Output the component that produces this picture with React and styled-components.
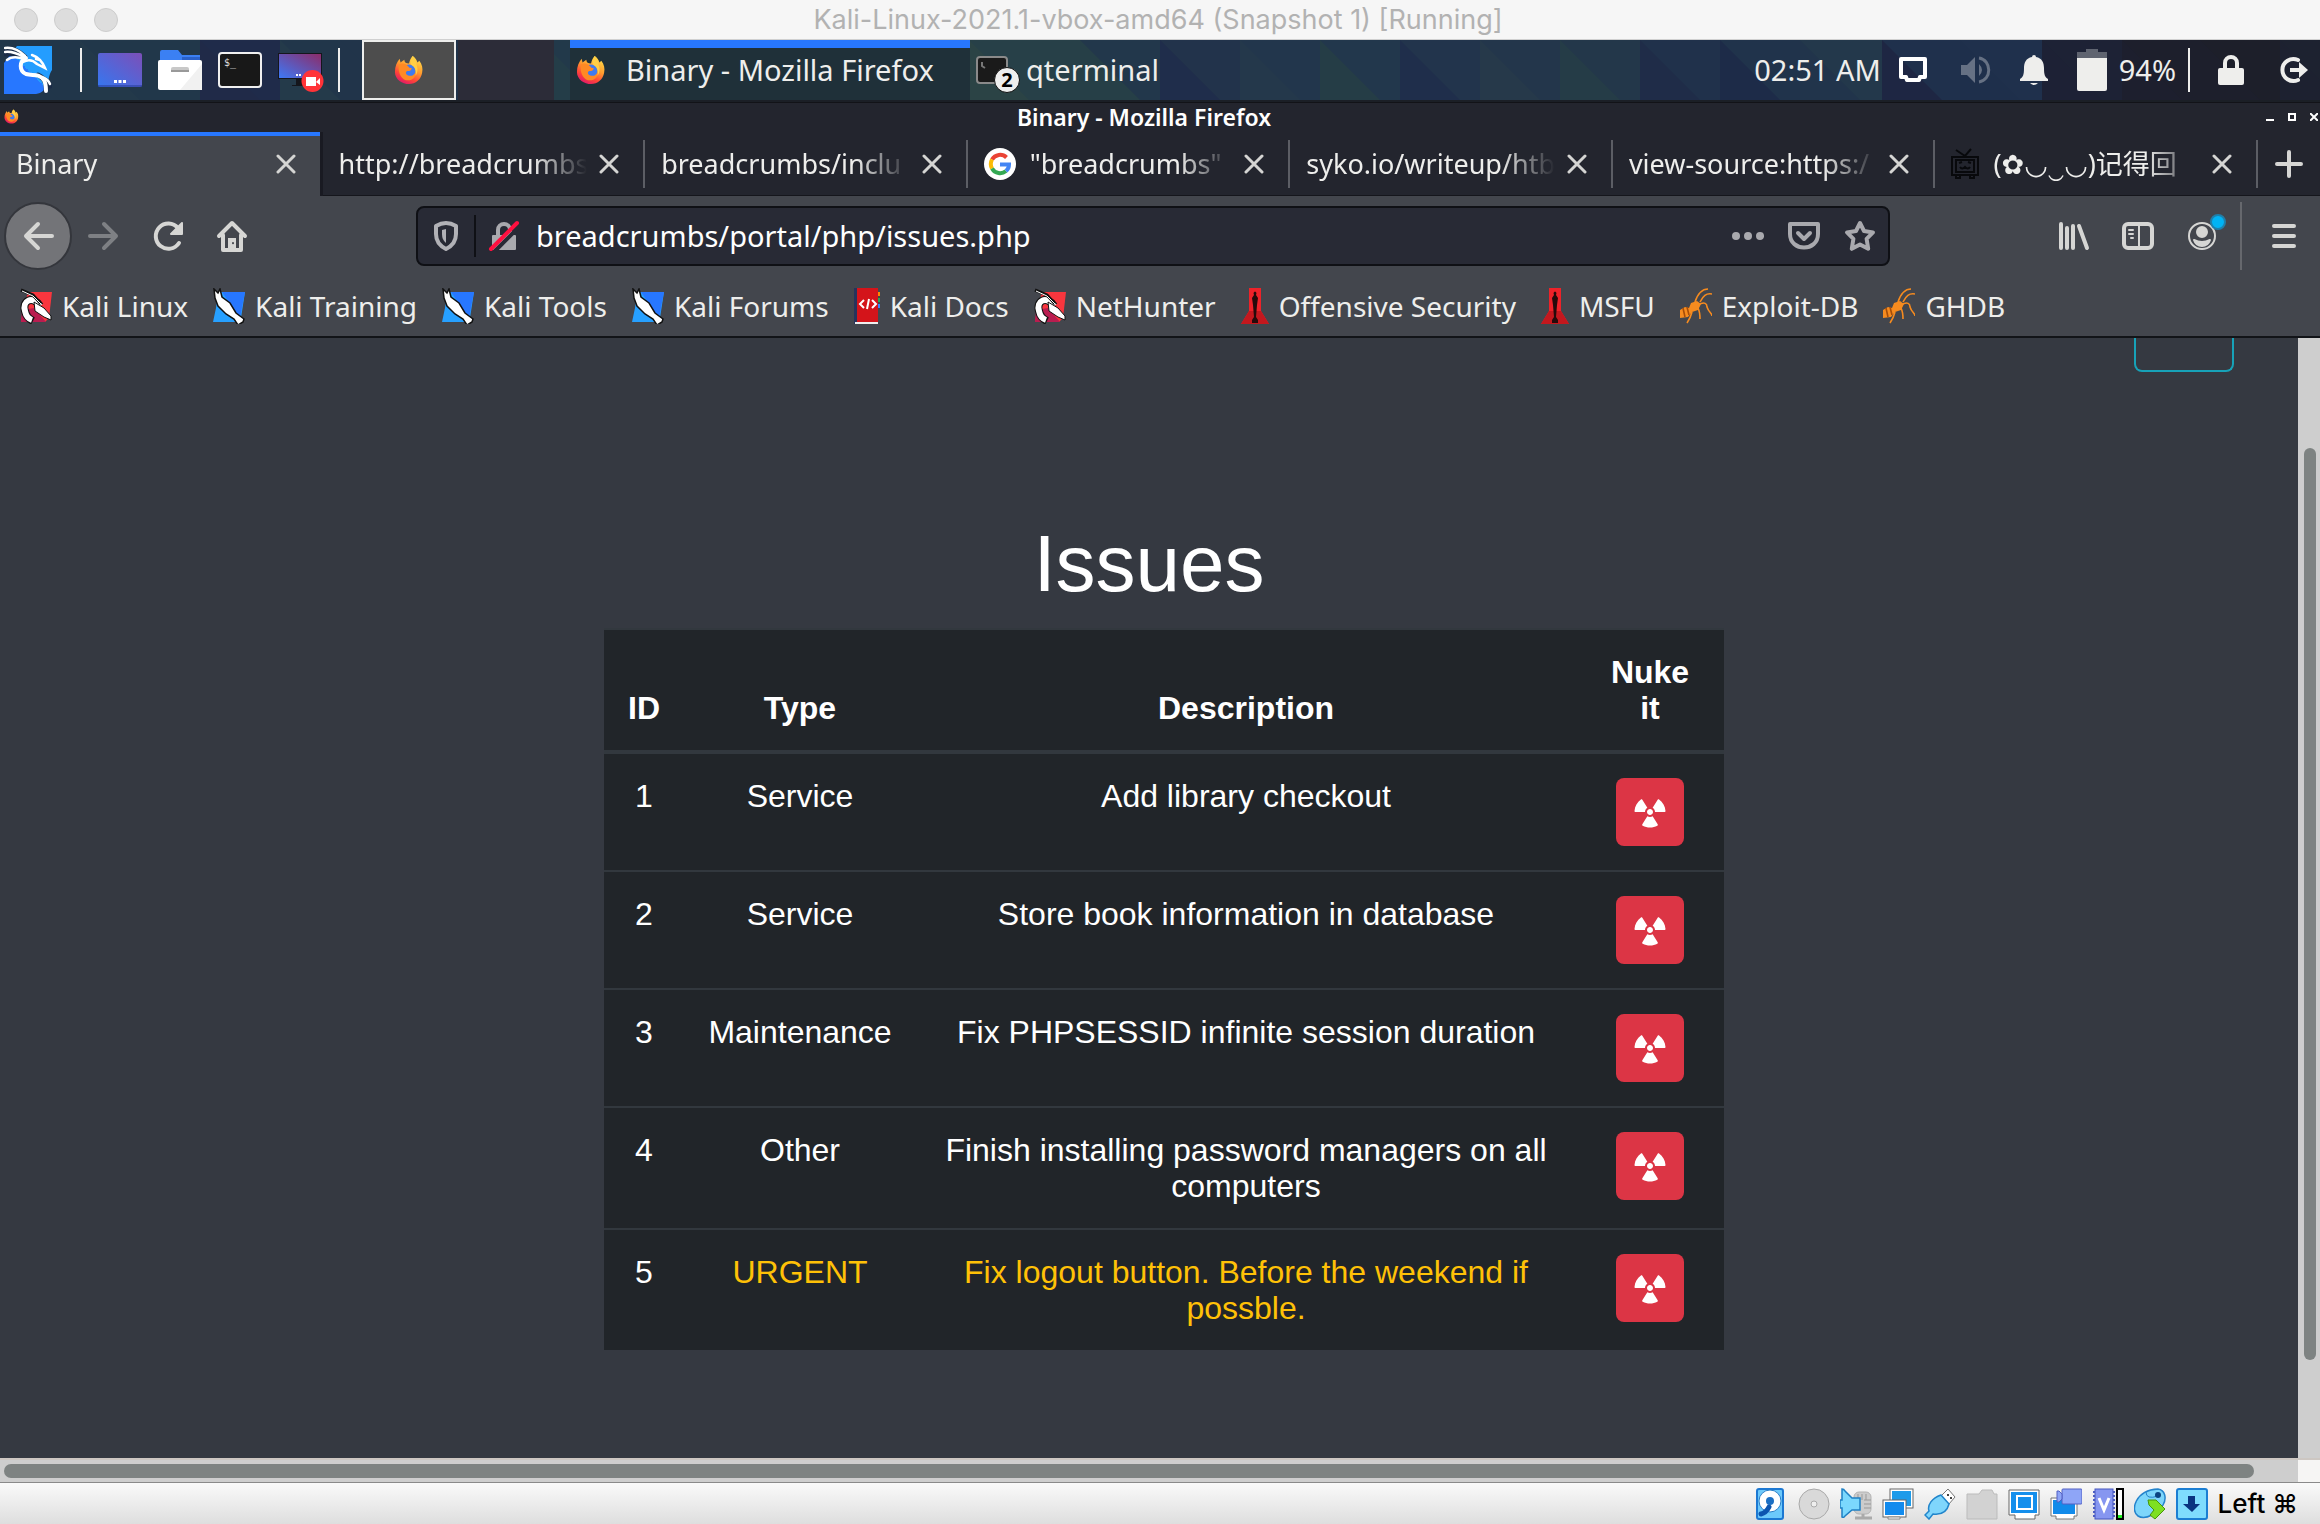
import React from "react";
import styled, { createGlobalStyle, css } from "styled-components";
import { FaRadiation } from "react-icons/fa";

const UI = `"Noto Sans", "DejaVu Sans", "Noto Sans CJK SC", sans-serif`;
const MAC = `Inter, "Liberation Sans", sans-serif`;
const WEB = `"Liberation Sans", Arial, sans-serif`;

const Global = createGlobalStyle`
  *, *::before, *::after { box-sizing: border-box; }
  body { margin: 0; background: #353941; overflow: hidden; }
  button, input { font: inherit; color: inherit; }
  svg { display: block; flex: none; }
`;

const Screen = styled.div`
  min-height: 100vh;
  display: flex;
  flex-direction: column;
  font-family: ${UI};
  font-size: 28px;
  line-height: 36px;
  color: #eeeeec;
`;

/* ---------- host window ---------- */
const HostBar = styled.header`
  display: grid;
  grid-template-columns: 1fr auto 1fr;
  align-items: center;
  height: 40px;
  padding: 0 18px 0 14px;
  background: #f6f6f6;
  border-bottom: 1px solid #d0d0d0;
  font-family: ${MAC};
  color: #b2b2b2;
`;
const HostTitle = styled.div`
  font-size: 27px;
  line-height: 36px;
  white-space: nowrap;
`;
const Lights = styled.div`
  display: flex;
  gap: 16px;
`;
const Light = styled.button`
  width: 24px;
  height: 24px;
  padding: 0;
  border: 1px solid #cdcdcd;
  border-radius: 50%;
  background: #dddddd;
`;

/* ---------- desktop panel ---------- */
const Panel = styled.div`
  position: relative;
  display: flex;
  align-items: center;
  height: 62px;
  border-bottom: 2px solid #1b1f26;
  background: #21354a;
  font-size: 29px;
  overflow: hidden;
`;
const Wallpaper = styled.svg`
  position: absolute;
  left: 0;
  top: 0;
`;
const PanelGroup = styled.div`
  position: relative;
  display: flex;
  align-items: center;
  height: 100%;
  gap: ${(p) => p.$gap || 0}px;
  padding: ${(p) => p.$pad || "0"};
  margin-left: ${(p) => (p.$end ? "auto" : "0")};
`;
const Divider = styled.span`
  flex: none;
  width: 2px;
  height: ${(p) => p.$h}px;
  background: ${(p) => p.$c || "#eeeeec"};
`;
const PlainButton = styled.button`
  display: flex;
  align-items: center;
  justify-content: center;
  flex: none;
  padding: 0;
  border: 0;
  background: none;
`;
const PinnedTask = styled(PlainButton)`
  width: 94px;
  height: 60px;
  border: 2px solid #eeeeec;
  background: #4d4d4d;
`;
const EmptyTask = styled.span`
  width: 96px;
  height: 60px;
  margin-left: 2px;
  background: #2c2c38;
`;
const Task = styled(PlainButton)`
  justify-content: flex-start;
  gap: ${(p) => (p.$active ? 20 : 8)}px;
  width: ${(p) => (p.$active ? 400 : 200)}px;
  height: 60px;
  padding: 0 6px;
  white-space: nowrap;
  ${(p) =>
    p.$active &&
    css`
      background: #1f3039;
      box-shadow: inset 0 8px #2777ff;
    `}
`;
const TaskIcon = styled.span`
  position: relative;
  display: flex;
`;
const Count = styled.span`
  position: absolute;
  left: 18px;
  top: 12px;
  width: 26px;
  height: 26px;
  border: 1px solid #111;
  border-radius: 50%;
  background: #eee;
  color: #000;
  font-size: 20px;
  line-height: 24px;
  font-weight: 700;
  text-align: center;
`;

/* ---------- browser chrome ---------- */
const TitleRow = styled.div`
  display: grid;
  grid-template-columns: 1fr auto 1fr;
  align-items: center;
  height: 30px;
  padding: 0 2px 2px 4px;
  background: #23252e;
  border-top: 1px solid #121318;
`;
const WindowTitle = styled.div`
  margin-right: 34px;
  font-size: 23px;
  line-height: 26px;
  font-weight: 600;
  color: #fff;
`;
const WindowButtons = styled.div`
  display: flex;
  justify-content: flex-end;
  gap: 14px;
`;
const TabStrip = styled.div`
  display: flex;
  height: 64px;
  background: #23252e;
  border-bottom: 1px solid #15161c;
  font-size: 27px;
`;
const Tab = styled.div`
  flex: 1 1 100px;
  min-width: 0;
  display: flex;
  align-items: center;
  gap: 6px;
  padding: 0 ${(p) => (p.$active ? 24 : 26)}px 0 16px;
  ${(p) =>
    p.$active
      ? css`
          height: 64px;
          background: #43464d;
          border-right: 3px solid #191a22;
          box-shadow: inset 0 4px #2777ff;
        `
      : css`
          background: linear-gradient(#5c5e65, #5c5e65) right center / 2px 48px no-repeat;
        `}
`;
const TabLabel = styled.button`
  flex: 1;
  min-width: 0;
  display: flex;
  align-items: center;
  gap: 14px;
  padding: 0;
  border: 0;
  background: none;
  text-align: left;
  white-space: nowrap;
  mask-image: linear-gradient(to left, transparent 6px, #000 60px);
`;
const NewTab = styled(PlainButton)`
  width: 62px;
`;
const NavBar = styled.div`
  display: flex;
  align-items: center;
  justify-content: space-between;
  height: 80px;
  padding: 0 20px 0 4px;
  background: #43464d;
`;
const NavGroup = styled.div`
  display: flex;
  align-items: center;
  gap: ${(p) => p.$gap}px;
`;
const BackButton = styled(PlainButton)`
  width: 68px;
  height: 68px;
  border: 2px solid #34363c;
  border-radius: 50%;
  background: #737478;
`;
const UrlBox = styled.div`
  flex: 1;
  display: flex;
  align-items: center;
  gap: 12px;
  height: 60px;
  margin: 0 168px;
  padding: 0 12px;
  border: 2px solid #0f1015;
  border-radius: 8px;
  background: #282a35;
  color: #fff;
`;
const UrlInput = styled.input`
  flex: 1;
  min-width: 0;
  padding: 0;
  margin-left: 4px;
  border: 0;
  outline: 0;
  background: none;
  font-size: 29px;
`;
const Account = styled(PlainButton)`
  position: relative;
`;
const Dot = styled.span`
  position: absolute;
  right: -8px;
  top: -6px;
  width: 16px;
  height: 16px;
  border: 2px solid #1f7fa9;
  border-radius: 50%;
  background: #00b3f4;
`;
const Bookmarks = styled.nav`
  display: flex;
  align-items: center;
  gap: 25px;
  height: 62px;
  padding: 0 20px;
  background: #43464d;
  border-bottom: 2px solid #121418;
`;
const Bookmark = styled.a`
  display: flex;
  align-items: center;
  gap: 10px;
  color: inherit;
  text-decoration: none;
  white-space: nowrap;
`;

/* ---------- web page ---------- */
const Viewport = styled.div`
  flex: 1;
  display: flex;
`;
const Page = styled.main`
  flex: 1;
  display: flex;
  flex-direction: column;
  background: #353941;
  font-family: ${WEB};
  color: #fff;
`;
const HomeButton = styled.button`
  align-self: flex-end;
  width: 100px;
  height: 34px;
  margin-right: 64px;
  border: 2px solid #17a2b8;
  border-top: 0;
  border-radius: 0 0 8px 8px;
  background: none;
`;
const Heading = styled.h1`
  margin: 144px 0 16px;
  font-size: 80px;
  line-height: 96px;
  font-weight: 400;
  text-align: center;
`;
const TableWrap = styled.div`
  display: flex;
  justify-content: center;
  padding-left: 30px;
`;
const Table = styled.table`
  width: 1120px;
  max-width: 100%;
  table-layout: fixed;
  border-collapse: separate;
  border-spacing: 0;
  background: #212529;
  font-size: 32px;
  line-height: 36px;
  text-align: center;
`;
const Col = styled.col`
  width: ${(p) => p.$w};
`;
const Th = styled.th`
  padding: 24px;
  border-top: 2px solid #32383e;
  border-bottom: 4px solid #32383e;
  vertical-align: bottom;
`;
const Td = styled.td`
  padding: 24px;
  border-top: ${(p) => (p.$first ? 0 : 2)}px solid #32383e;
  vertical-align: top;
  color: ${(p) => (p.$warn ? "#ffc107" : "#fff")};
`;
const NukeButton = styled(PlainButton)`
  width: 68px;
  height: 68px;
  margin: 0 auto;
  border-radius: 8px;
  background: #dc3545;
  font-size: 32px;
  color: #fff;
`;
const VTrack = styled.div`
  display: flex;
  flex-direction: column;
  width: 22px;
  padding: 0 4px 0 6px;
  background: #cecece;
`;
const HTrack = styled.div`
  display: flex;
  align-items: center;
  height: 24px;
  padding-left: 4px;
  background: #cecece;
  border-top: 2px solid #cdc7c2;
`;
const Thumb = styled.span`
  flex: ${(p) => p.$len} 0 0;
  height: ${(p) => (p.$h ? "14px" : "auto")};
  border-radius: 8px;
  background: #7e8382;
`;
const Space = styled.span`
  flex: ${(p) => p.$len} 0 0;
`;
const Corner = styled.span`
  width: 22px;
  height: 22px;
  background: #f6f5f4;
`;
const StatusBar = styled.footer`
  display: flex;
  align-items: center;
  justify-content: flex-end;
  gap: 10px;
  height: 42px;
  padding-right: 22px;
  background: linear-gradient(#fafafa, #dedede);
  border-top: 1px solid #8a8a8a;
  font-family: ${MAC};
  font-size: 26px;
  font-weight: 500;
  color: #000;
`;

/* ---------- drawings ---------- */
const wallpaper = [
  [0, "#21364a", "#21364a"], [80, "#21374a", "#23394a"], [200, "#1f2b4a", "#202a48"],
  [280, "#21364a", "#243a4a"], [340, "#21344a", "#21344a"], [540, "#22394a", "#243d48"], [969, "#274048", "#2b4345"],
  [1080, "#22374b", "#263f47"], [1160, "#22334b", "#1f2d4b"], [1240, "#22364c", "#24384b"],
  [1320, "#22374c", "#253d46"], [1400, "#22344c", "#1f2e4b"], [1480, "#23364b", "#26394a"],
  [1560, "#23374a", "#253c47"], [1640, "#20314b", "#1f2c48"], [1720, "#20334b", "#1d2b48"],
  [1800, "#23384b", "#21344b"], [1882, "#1f304c", "#1e2643"], [1960, "#1f304c", "#1e2f4b"],
  [2042, "#1d2235", "#1d2135"], [2122, "#1d1f2c", "#1d1f2e"], [2200, "#1d1f2a", "#1d1f2c"],
  [2280, "#1d2230", "#1d2130"],
];
const PanelWallpaper = () => (
  <Wallpaper width="2400" height="60" aria-hidden="true">
    {wallpaper.map(([x, base, tri]) => (
      <g key={x}>
        <rect x={x} width={2400 - x} height="60" fill={base} />
        <path d={`M${x} 0l60 60h-60z`} fill={tri} />
      </g>
    ))}
  </Wallpaper>
);

const Firefox = ({ size, id }) => (
  <svg width={size} height={size} viewBox="0 0 32 32">
    <defs>
      <linearGradient id={id} x1=".8" y1="0" x2=".3" y2="1">
        <stop offset="0" stopColor="#ffe14a" />
        <stop offset=".45" stopColor="#ff9a2e" />
        <stop offset=".75" stopColor="#ff4438" />
        <stop offset="1" stopColor="#e0186a" />
      </linearGradient>
    </defs>
    <path fill={`url(#${id})`} d="M20 1c3 2 4 4 5 7l2-2c3 4 4 8 3 13-1 7-7 12-14 12S1 26 1 18C1 12 3 8 6 4l1 4 4-3c0 3 2 4 5 4 1-4 2-6 4-8z" />
    <circle cx="16" cy="17" r="7" fill="#3f7bee" />
    <path fill="#ff8a24" d="M5 10c4-2 8-1 10 2 1 2 3 2 4 2-1 3-3 3-5 3-2 1-2 4 2 5 3 1 6-1 7-4 1 5-3 9-8 9-6 0-11-6-10-17z" />
    <path fill="#ffcf45" d="M20 1c3 3 4 5 4 9 2 5 1 9-1 12 1-6-1-9-4-11-3-3-1-7 1-10z" />
  </svg>
);
const KaliMenu = () => (
  <svg width="48" height="48" viewBox="0 0 48 48">
    <defs>
      <linearGradient id="kali" x1="1" y1="0" x2="0" y2="1">
        <stop offset=".5" stopColor="#249dff" />
        <stop offset=".5" stopColor="#2777ff" />
      </linearGradient>
    </defs>
    <path fill="url(#kali)" d="M13 0h35v24c-3 4-3 9-5 15-2 5-5 8-11 9H0V17z" />
    <g fill="none" strokeLinecap="round">
      <g stroke="#1b2c48" strokeWidth="5">
        <path d="M1 3c8-1 15 3 20 8M2 8c7-1 13 1 18 4" />
        <path d="M38 32c5 2 7 5 8 8M34 29c7 3 9 9 8 16" />
      </g>
      <g stroke="#fff" strokeWidth="2.5">
        <path d="M1 2c8-1 15 3 20 8M1 6c7-1 13 2 19 5M3 14c5-4 11-3 17-1" />
        <path strokeWidth="4" d="M22 12c-7 3-7 13 0 16 7 2 13-1 18 6 2 4 2 7 2 11" />
        <path d="M38 31c5 2 7 4 8 7M28 9c6 2 10 6 13 13l-8-4c-4-4-9-5-14-2M32 13l4 1" />
      </g>
    </g>
  </svg>
);
const Desktop = () => (
  <svg width="44" height="44" viewBox="0 0 44 44">
    <defs>
      <linearGradient id="desk" x1="0" y1="1" x2="1" y2="0">
        <stop stopColor="#3577f0" />
        <stop offset="1" stopColor="#7c4fb8" />
      </linearGradient>
    </defs>
    <rect y="5" width="44" height="34" rx="2" fill="url(#desk)" />
    <path fill="#2b3f9e" opacity=".6" d="M0 37h44v2H0z" />
    <path fill="#fff" d="M16 32h3v3h-3zM20.500 32h3v3h-3zM25 32h3v3h-3z" />
  </svg>
);
const Folder = () => (
  <svg width="44" height="44" viewBox="0 0 44 44">
    <path fill="#3b80f3" d="M2 14V4q0-2 2-2h16l4 5h18v8z" />
    <path fill="#2a61c9" d="M24 9h18v3H24z" />
    <rect y="12" width="44" height="30" rx="2" fill="#fff" />
    <path fill="#f1f1f1" d="M44 16v26H22z" />
    <path fill="#c8c8c8" d="M13 21q0-2 2-2h14q2 0 2 2v3H13z" />
    <path fill="#999" d="M13 22h18v2H13z" />
  </svg>
);
const Prompt = styled.span`
  display: flex;
  align-items: flex-start;
  width: 44px;
  height: 36px;
  padding-left: 4px;
  border: 2px solid #f0f0f0;
  border-radius: 4px;
  background: #181818;
  color: #ddd;
  font-family: "DejaVu Sans Mono", monospace;
  font-size: 10px;
  line-height: 18px;
`;
const RecorderIcon = styled.svg`
  overflow: visible;
`;
const Recorder = () => (
  <RecorderIcon width="44" height="44" viewBox="0 0 44 44">
    <defs>
      <linearGradient id="rec" x1="0" y1="1" x2="1" y2="0">
        <stop stopColor="#3d78f5" />
        <stop offset="1" stopColor="#8d2c69" />
      </linearGradient>
    </defs>
    <path fill="#15161c" d="M0 5h44v26H30v6h4v1H14v-1h4v-6H0z" />
    <path fill="url(#rec)" d="M1 6h42v24H1z" />
    <path fill="#fff" d="M18 26h2v2h-2zM21 26h2v2h-2z" />
    <circle cx="34.500" cy="33" r="11" fill="#ff3338" />
    <path fill="#fff" d="M28 29h10v9H28zM38 34l4-4v7z" />
  </RecorderIcon>
);
const Terminal = () => (
  <svg width="32" height="30" viewBox="0 0 32 30">
    <rect x="1" y="2" width="30" height="26" rx="3" fill="#1a1a1a" stroke="#8a8a8a" strokeWidth="2" />
    <path d="M6 7v4l3 2" stroke="#777" strokeWidth="2" fill="none" />
  </svg>
);
const Tray = {
  display: <svg width="28" height="28" viewBox="0 0 28 28"><path d="M2 3h24v18h-5l-1 3H8l-1-3H2z" fill="none" stroke="#fff" strokeWidth="4" strokeLinejoin="round" /></svg>,
  volume: <svg width="30" height="30" viewBox="0 0 30 30"><path fill="#667184" d="M0 10h6l8-8v26l-8-8H0zM18 9q6 6 0 12z" /><path fill="none" stroke="#667184" strokeWidth="3" d="M18 3c13 2 13 22 0 24" /></svg>,
  bell: <svg width="30" height="32" viewBox="0 0 30 32"><path fill="#eeeeec" d="M13 3q0-2 2-2t2 2c6 1 8 6 8 11 0 7 1 9 4 11v2H1v-2c3-2 4-4 4-11C5 9 7 4 13 3zM11 29h8q-4 4-8 0z" /></svg>,
  battery: <svg width="30" height="44" viewBox="0 0 30 44"><path fill="#5f6470" d="M9 1h12v3h9v7H0V4h9z" /><path fill="#eeeeec" d="M0 10h30v31q0 2-2 2H2q-2 0-2-2z" /></svg>,
  lock: <svg width="26" height="32" viewBox="0 0 26 32"><path fill="none" stroke="#eeeeec" strokeWidth="4" d="M7 16V9a6 6 0 0 1 12 0v7" /><rect y="14" width="26" height="17" rx="2" fill="#eeeeec" /></svg>,
  logout: <svg width="32" height="30" viewBox="0 0 32 30"><path fill="none" stroke="#eeeeec" strokeWidth="4" strokeLinecap="round" d="M20 5a11 11 0 1 0 0 20" /><path fill="#eeeeec" d="M12 13h9V7l9 8-9 8v-6h-9z" /></svg>,
};
const Cross = () => (
  <svg width="20" height="20" viewBox="0 0 20 20"><path d="M2 2l16 16M18 2L2 18" stroke="#d5d5d3" strokeWidth="3" strokeLinecap="round" /></svg>
);
const Glyph = ({ children, c = "#d6d6d4", w = 2 }) => (
  <svg width="32" height="32" viewBox="0 0 16 16" fill="none" stroke={c} strokeWidth={w} strokeLinecap="round" strokeLinejoin="round">{children}</svg>
);
const Google = () => (
  <svg width="32" height="32" viewBox="0 0 32 32" fill="none" strokeWidth="4">
    <circle cx="16" cy="16" r="16" fill="#fff" />
    <path stroke="#ea4335" d="M8 11.500a9.200 9.200 0 0 1 14.500-2" />
    <path stroke="#fbbc05" d="M8 20.500a9.500 9.500 0 0 1 0-9" />
    <path stroke="#34a853" d="M22 23a9.300 9.300 0 0 1-14-2.500" />
    <path stroke="#4285f4" d="M16 16.500h9c0 3-1 5-3 6.500" />
  </svg>
);
const Tv = () => (
  <svg width="28" height="32" viewBox="0 0 28 32" fill="none" stroke="#08090c" strokeWidth="2">
    <path d="M1 9h26v18H1zM5 12h18v12H5zM5 2l9 6 6-7M5 27v3h4v-3M19 27v3h4v-3" />
    <path d="M8 15l3-1M20 15l-3-1M9 19q2 3 5 0 3 3 5 0" />
  </svg>
);
const RedDragon = () => (
  <svg width="32" height="36" viewBox="0 0 32 36">
    <path fill="#f8363e" d="M8 4h24l-3 26-4 4H1l2-12z" />
    <path fill="#b91d50" d="M2 22l12-2 12 14H1z" />
    <path fill="none" stroke="#111" strokeWidth="8" d="M20 18C12 7 2 13 5 23c1 5 4 8 8 10" />
    <path fill="none" stroke="#fff" strokeWidth="6" d="M20 18C12 7 2 13 5 23c1 5 4 8 7 9" />
    <path fill="#fff" stroke="#111" d="M14 14l10 6 7 8v4l-7-3-9-6z" />
    <path fill="none" stroke="#111" strokeWidth="3" d="M1 2l12 5 8 9" />
    <path fill="none" stroke="#fff" d="M2 3l11 5 8 8" />
  </svg>
);
const BlueDragon = () => (
  <svg width="32" height="36" viewBox="0 0 32 36">
    <path fill="#27a0ff" d="M5 4h27l-4 26-4 4H0l3-14z" />
    <path fill="#2777ff" d="M9 4h23l-5 26z" />
    <path fill="#fff" stroke="#111" strokeWidth="1.500" d="M1 1l4 4 2-4 2 8 8 6 6 10 8 6-1 3-5 3-4-6-8-5-8-8-3-8z" />
  </svg>
);
const Docs = () => (
  <svg width="26" height="36" viewBox="0 0 26 36">
    <path fill="#f80" d="M24 4h2v4h-2z" /><path fill="#2a5" d="M24 10h2v4h-2z" /><path fill="#38f" d="M24 16h2v4h-2z" />
    <path fill="#d4141a" d="M0 0h24v36H0z" /><path fill="#26335c" d="M0 0h3v36H0z" /><path fill="#eee" d="M1 34h23v2H1z" />
    <path fill="none" stroke="#fff" strokeWidth="2" d="M10 12l-4 4 4 4M18 12l4 4-4 4M15 11l-2 10" />
  </svg>
);
const Offsec = () => (
  <svg width="28" height="36" viewBox="0 0 28 36">
    <path fill="#ee2229" d="M8 0h12v23l8 13H0l8-13z" />
    <path fill="#c4181e" d="M8 23h12l8 13H0z" />
    <path fill="#260a0b" d="M12.500 5q1.500-3 3 0l-.5 2 2 3-1 7-1 12 2 3v3h-6v-3l2-3-1-12-1-7 2-3z" />
  </svg>
);
const Bug = () => (
  <svg width="32" height="36" viewBox="0 0 32 36" fill="none" stroke="#f68b1f" strokeWidth="1.600">
    <path fill="#f68b1f" stroke="none" d="M0 22l5-3 4 1 2-5 6-2 4 3-3 6-6 2-4 5-8 1z" />
    <path d="M15 14c3-9 7-13 13-13M20 14c3-6 6-9 12-8M18 17c7-4 9-1 9 2 2 6 5 6 5 9M18 20c2 4 2 7 2 11M12 24c-1 4-3 8-5 11" />
    <path stroke="#a64d08" d="M3 20l2 9M7 19l2 8" />
  </svg>
);

const S = ({ children }) => <svg width="32" height="32" viewBox="0 0 32 32">{children}</svg>;
const statusIcons = {
  "Hard disk": <S><rect x="1" y="1" width="26" height="30" rx="2" fill="#6cc9fb" stroke="#1c78d2" strokeWidth="2" /><circle cx="14" cy="13" r="11" fill="#fff" stroke="#2a7fc9" /><circle cx="14" cy="13" r="4" fill="#1b6fc4" /><path d="M5 26q5-1 8-7" stroke="#0c55b0" strokeWidth="5" fill="none" strokeLinecap="round" /></S>,
  "Optical disc": <S><circle cx="16" cy="16" r="15" fill="#d9d9d9" stroke="#a9a9a9" /><circle cx="16" cy="16" r="3" fill="#eee" stroke="#aaa" /></S>,
  Audio: <S><rect x="14" y="4" width="17" height="22" rx="5" fill="#ccc" stroke="#b4b4b4" /><path d="M18 6v6M22 6v6M26 6v6M24 12h7M24 16h7M24 20h7" stroke="#999" /><path d="M15 30h17M23 26v4" stroke="#aaa" strokeWidth="3" /><path fill="#7bd8fd" stroke="#1f80c4" strokeWidth="1.500" d="M2 1q2 0 3 2l7 7h8v12h-8l-7 6q-1 2-3 1V20H0v-8h2z" /></S>,
  Network: <S><rect x="8" y="1" width="23" height="19" fill="#fff" stroke="#666" /><rect x="10" y="3" width="19" height="15" fill="#1d9bea" /><rect x="1" y="12" width="23" height="17" fill="#fff" stroke="#666" /><rect x="3" y="14" width="19" height="13" fill="#118bee" /><path fill="#fff" stroke="#888" d="M6 29h12v2H6z" /></S>,
  USB: <S><path fill="#fff" stroke="#777" d="M24 1l7 8-6 7-8-8z" /><path fill="#444" d="M23 6h2v2h-2zM26 9h2v2h-2z" /><path fill="#7fd6fc" stroke="#2185cb" strokeWidth="1.500" d="M17 7l8 9c-2 8-8 11-16 10l-4 5-4-4 4-4c-2-6 3-13 12-16z" /></S>,
  "Shared folders": <S><path fill="#d2d2d2" stroke="#bbb" d="M1 6h12l3-4h10l2 4h3v25H1z" /></S>,
  Display: <S><path fill="#fff" stroke="#666" d="M1 2h30v25h-4v4H7v-4H1z" /><rect x="3" y="4" width="26" height="21" fill="#158fec" /><rect x="9" y="8" width="15" height="13" fill="none" stroke="#fff" strokeWidth="2" /></S>,
  Recording: <S><path fill="#fff" stroke="#777" d="M1 10h26v18h-3v3H6v-3H1z" /><rect x="3" y="12" width="22" height="14" fill="#128bea" /><rect x="12" y="1" width="20" height="15" rx="1" fill="#8ea5f7" stroke="#5261c4" /><path fill="#8ea5f7" stroke="#5261c4" d="M7 3h2l3 3v5l-3 3H7z" /></S>,
  Processor: <S><path stroke="#4f5fc4" strokeWidth="2" strokeDasharray="2 2" d="M2 3v27M22 3v27" /><rect x="3" y="1" width="18" height="30" fill="#8696f0" stroke="#4757bd" /><path d="M7 10l5 12 5-12" fill="none" stroke="#fff" strokeWidth="3" /><rect x="25" y="1" width="6" height="30" fill="#fff" stroke="#000" strokeWidth="2" /><path fill="#1ff11f" d="M26 27h4v3h-4z" /></S>,
  Mouse: <S><path fill="#7dd6fb" stroke="#2584cc" strokeWidth="1.500" d="M24 1c7 1 9 9 5 16S12 33 4 28 1 2 24 1z" /><path d="M12 4q0 8 12 4" stroke="#2584cc" fill="none" /><circle cx="24" cy="7" r="3" fill="#0b4482" /><path fill="#7ee022" stroke="#479609" d="M14 12h8l9 9-10 10-5-4 4-5-5-5z" /></S>,
  Keyboard: <S><rect x="1" y="1" width="30" height="30" rx="2" fill="#7fdcfd" stroke="#1c7ed2" strokeWidth="2" /><path fill="#0a3480" d="M12 8h7v8h5l-8 8-9-8h5z" /></S>,
};

/* ---------- content ---------- */
const tabs = [
  { text: "Binary", active: true },
  { text: "http://breadcrumbs" },
  { text: "breadcrumbs/inclu" },
  { text: '"breadcrumbs"', icon: <Google /> },
  { text: "syko.io/writeup/htb" },
  { text: "view-source:https:/" },
  { text: "(✿◡‿◡)记得回", icon: <Tv /> },
];
const bookmarks = [
  ["Kali Linux", <RedDragon />], ["Kali Training", <BlueDragon />], ["Kali Tools", <BlueDragon />],
  ["Kali Forums", <BlueDragon />], ["Kali Docs", <Docs />], ["NetHunter", <RedDragon />],
  ["Offensive Security", <Offsec />], ["MSFU", <Offsec />], ["Exploit-DB", <Bug />], ["GHDB", <Bug />],
];
const issues = [
  { id: 1, type: "Service", text: "Add library checkout" },
  { id: 2, type: "Service", text: "Store book information in database" },
  { id: 3, type: "Maintenance", text: "Fix PHPSESSID infinite session duration" },
  { id: 4, type: "Other", text: "Finish installing password managers on all computers" },
  { id: 5, type: "URGENT", text: "Fix logout button. Before the weekend if possble.", warn: true },
];

export default function App() {
  return (
    <Screen>
      <Global />
      <HostBar>
        <Lights>
          <Light aria-label="Close" />
          <Light aria-label="Minimize" />
          <Light aria-label="Zoom" />
        </Lights>
        <HostTitle>Kali-Linux-2021.1-vbox-amd64 (Snapshot 1) [Running]</HostTitle>
      </HostBar>

      <Panel>
        <PanelWallpaper />
        <PanelGroup $gap={16} $pad="0 22px 0 4px">
          <PlainButton aria-label="Applications"><KaliMenu /></PlainButton>
          <PanelGroup $pad="0 0 0 12px"><Divider $h={44} /></PanelGroup>
          <PlainButton aria-label="Show desktop"><Desktop /></PlainButton>
          <PlainButton aria-label="Files"><Folder /></PlainButton>
          <PlainButton aria-label="Terminal"><Prompt>$_</Prompt></PlainButton>
          <PlainButton aria-label="Screen recorder"><Recorder /></PlainButton>
          <Divider $h={44} />
        </PanelGroup>
        <PanelGroup $pad="0 16px 0 0">
          <PinnedTask aria-label="Firefox"><Firefox size={30} id="ff1" /></PinnedTask>
          <EmptyTask />
        </PanelGroup>
        <PanelGroup>
          <Task $active><Firefox size={30} id="ff2" />Binary - Mozilla Firefox</Task>
          <Task>
            <PanelGroup $pad="0 10px 0 0">
              <TaskIcon><Terminal /><Count>2</Count></TaskIcon>
            </PanelGroup>
            qterminal
          </Task>
        </PanelGroup>
        <PanelGroup $end $gap={34} $pad="0 10px 0 0">
          <PanelGroup $gap={18}>
            <span>02:51 AM</span>
            <PlainButton aria-label="Display">{Tray.display}</PlainButton>
          </PanelGroup>
          <PanelGroup $gap={28}>
            <PlainButton aria-label="Volume">{Tray.volume}</PlainButton>
            <PlainButton aria-label="Notifications">{Tray.bell}</PlainButton>
            <PanelGroup $gap={12}>
              {Tray.battery}
              <span>94%</span>
              <Divider $h={44} />
            </PanelGroup>
            <PlainButton aria-label="Lock screen">{Tray.lock}</PlainButton>
          </PanelGroup>
          <PlainButton aria-label="Log out">{Tray.logout}</PlainButton>
        </PanelGroup>
      </Panel>

      <TitleRow>
        <Firefox size={15} id="ff3" />
        <WindowTitle>Binary - Mozilla Firefox</WindowTitle>
        <WindowButtons>
          <PlainButton aria-label="Minimize window"><svg width="8" height="8"><path fill="#fff" d="M0 6h8v2H0z" /></svg></PlainButton>
          <PlainButton aria-label="Maximize window"><svg width="8" height="8"><path fill="none" stroke="#fff" strokeWidth="2" d="M1 1h6v6H1z" /></svg></PlainButton>
          <PlainButton aria-label="Close window"><svg width="8" height="8"><path stroke="#fff" strokeWidth="2" d="M0 0l8 8M8 0L0 8" /></svg></PlainButton>
        </WindowButtons>
      </TitleRow>

      <TabStrip>
        {tabs.map((t) => (
          <Tab key={t.text} $active={t.active}>
            <TabLabel>{t.icon}{t.text}</TabLabel>
            <PlainButton aria-label={`Close tab ${t.text}`}><Cross /></PlainButton>
          </Tab>
        ))}
        <NewTab aria-label="New tab">
          <svg width="28" height="28"><path d="M14 2v24M2 14h24" stroke="#d6d6d4" strokeWidth="4" strokeLinecap="round" /></svg>
        </NewTab>
      </TabStrip>

      <NavBar>
        <NavGroup $gap={32}>
          <NavGroup $gap={16}>
            <BackButton aria-label="Back"><Glyph><path d="M15 8H2M8 2L2 8l6 6" /></Glyph></BackButton>
            <PlainButton aria-label="Forward"><Glyph c="#7e8084"><path d="M1 8h13M8 2l6 6-6 6" /></Glyph></PlainButton>
          </NavGroup>
          <PlainButton aria-label="Reload"><Glyph><path d="M13.500 11.500A6.300 6.300 0 1 1 13 4" /><path fill="#d6d6d4" strokeWidth="1" d="M15 1.500V7H9.500z" /></Glyph></PlainButton>
          <PlainButton aria-label="Home"><Glyph><path d="M1.500 8L8 1.500 14.500 8M3.500 7.500V15h9V7.500" /><path fill="#d6d6d4" stroke="none" d="M6 9h4v6H6z" /><path stroke="#43464d" strokeWidth="1" d="M8.500 11.500v.1" /></Glyph></PlainButton>
        </NavGroup>
        <UrlBox>
          <PlainButton aria-label="Tracking protection"><Glyph c="#b1b1b6"><path d="M3 3q5-3 10 0v4q0 5-5 7.500Q3 12 3 7z" /><path fill="#b1b1b6" stroke="none" d="M6 5l2-.5v7Q6 10 6 7z" /></Glyph></PlainButton>
          <Divider $h={42} $c="#0f1015" />
          <PlainButton aria-label="Connection not secure"><Glyph c="#a9a9ae"><path d="M5 8V5a3 3 0 0 1 6 0v3" /><path fill="#a9a9ae" strokeWidth="1" d="M2.500 8h11v6.500h-11z" /><path stroke="#282a35" strokeWidth="2" d="M3.500 15.500l12-12" /><path stroke="#ff1040" d="M1.500 14.500l13-13" /></Glyph></PlainButton>
          <UrlInput aria-label="Address" defaultValue="breadcrumbs/portal/php/issues.php" />
          <NavGroup $gap={24}>
            <PlainButton aria-label="Page actions"><Glyph c="#a9a9ae"><path strokeWidth="4" d="M2 8h.01M8 8h.01M14 8h.01" /></Glyph></PlainButton>
            <PlainButton aria-label="Save to Pocket"><Glyph c="#a9a9ae"><path d="M1 2h14v5c0 9-14 9-14 0zM5 6.500l3 3 3-3" /></Glyph></PlainButton>
            <PlainButton aria-label="Bookmark this page"><Glyph c="#a9a9ae"><path d="M8 1.500l2 4 4.500.7-3.200 3.200.8 5L8 12.200l-4.100 2.200.8-5L1.500 6.200 6 5.500z" /></Glyph></PlainButton>
          </NavGroup>
        </UrlBox>
        <NavGroup $gap={22}>
          <NavGroup $gap={32}>
            <PlainButton aria-label="Library"><Glyph><path d="M1.500 2v12M4.500 4v10M7.500 3v11M10.500 3l4 11" /></Glyph></PlainButton>
            <PlainButton aria-label="Sidebar"><Glyph><rect x="1" y="2" width="14" height="12" rx="2" /><path strokeWidth="1" d="M8.500 2v12M3.500 5h2M3.500 7h2M4.500 9h1" /></Glyph></PlainButton>
            <Account aria-label="Account"><Glyph w={1}><circle cx="8" cy="8" r="6.500" /><circle cx="8" cy="6" r="2.500" fill="#d6d6d4" /><path fill="#d6d6d4" d="M4 10q4 2 8 0-1 3-4 3t-4-3z" /></Glyph><Dot /></Account>
          </NavGroup>
          <NavGroup $gap={26}>
            <Divider $h={68} $c="#66686d" />
            <PlainButton aria-label="Menu"><Glyph><path d="M3 3h10M3 8h10M3 13h10" /></Glyph></PlainButton>
          </NavGroup>
        </NavGroup>
      </NavBar>

      <Bookmarks>
        {bookmarks.map(([name, icon]) => (
          <Bookmark key={name} href="#">{icon}{name}</Bookmark>
        ))}
      </Bookmarks>

      <Viewport>
        <Page>
          <HomeButton aria-label="Home" />
          <Heading>Issues</Heading>
          <TableWrap>
            <Table>
              <colgroup>
                <Col $w="80px" />
                <Col $w="232px" />
                <Col />
                <Col $w="148px" />
              </colgroup>
              <thead>
                <tr>
                  <Th>ID</Th>
                  <Th>Type</Th>
                  <Th>Description</Th>
                  <Th>Nuke it</Th>
                </tr>
              </thead>
              <tbody>
                {issues.map((r, i) => (
                  <tr key={r.id}>
                    <Td $first={i === 0}>{r.id}</Td>
                    <Td $first={i === 0} $warn={r.warn}>{r.type}</Td>
                    <Td $first={i === 0} $warn={r.warn}>{r.text}</Td>
                    <Td $first={i === 0}>
                      <NukeButton aria-label={`Nuke issue ${r.id}`}><FaRadiation /></NukeButton>
                    </Td>
                  </tr>
                ))}
              </tbody>
            </Table>
          </TableWrap>
        </Page>
        <VTrack>
          <Space $len={110} />
          <Thumb $len={912} />
          <Space $len={98} />
        </VTrack>
      </Viewport>
      <HTrack>
        <Thumb $h $len={2250} />
        <Space $len={44} />
        <Corner />
      </HTrack>

      <StatusBar>
        {Object.entries(statusIcons).map(([name, icon]) => (
          <PlainButton key={name} aria-label={name}>{icon}</PlainButton>
        ))}
        <span>Left ⌘</span>
      </StatusBar>
    </Screen>
  );
}
